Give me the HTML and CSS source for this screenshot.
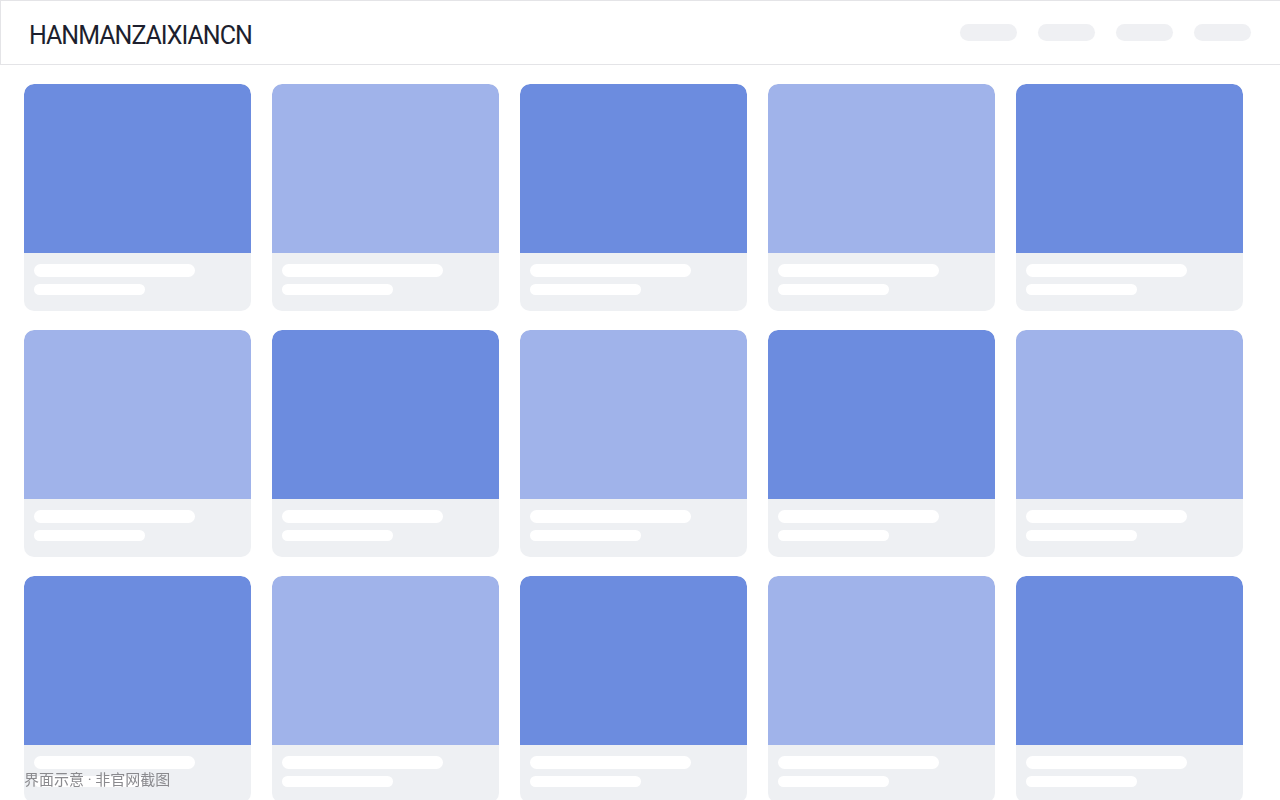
FILE: index.html
```html
<!DOCTYPE html>
<html lang="zh-CN">
<head>
<meta charset="utf-8">
<title>HANMANZAIXIANCN</title>
<link rel="stylesheet" href="styles.css">
</head>
<body>
<header class="topbar">
  <div class="logo">HANMANZAIXIANCN</div>
  <nav class="nav">
    <span class="nav-pill"></span>
    <span class="nav-pill"></span>
    <span class="nav-pill"></span>
    <span class="nav-pill"></span>
  </nav>
</header>
<main class="grid">
  <div class="card"><div class="thumb dark"></div><div class="meta"><span class="line long"></span><span class="line short"></span></div></div>
  <div class="card"><div class="thumb light"></div><div class="meta"><span class="line long"></span><span class="line short"></span></div></div>
  <div class="card"><div class="thumb dark"></div><div class="meta"><span class="line long"></span><span class="line short"></span></div></div>
  <div class="card"><div class="thumb light"></div><div class="meta"><span class="line long"></span><span class="line short"></span></div></div>
  <div class="card"><div class="thumb dark"></div><div class="meta"><span class="line long"></span><span class="line short"></span></div></div>

  <div class="card"><div class="thumb light"></div><div class="meta"><span class="line long"></span><span class="line short"></span></div></div>
  <div class="card"><div class="thumb dark"></div><div class="meta"><span class="line long"></span><span class="line short"></span></div></div>
  <div class="card"><div class="thumb light"></div><div class="meta"><span class="line long"></span><span class="line short"></span></div></div>
  <div class="card"><div class="thumb dark"></div><div class="meta"><span class="line long"></span><span class="line short"></span></div></div>
  <div class="card"><div class="thumb light"></div><div class="meta"><span class="line long"></span><span class="line short"></span></div></div>

  <div class="card"><div class="thumb dark"></div><div class="meta"><span class="line long"></span><span class="line short"></span></div></div>
  <div class="card"><div class="thumb light"></div><div class="meta"><span class="line long"></span><span class="line short"></span></div></div>
  <div class="card"><div class="thumb dark"></div><div class="meta"><span class="line long"></span><span class="line short"></span></div></div>
  <div class="card"><div class="thumb light"></div><div class="meta"><span class="line long"></span><span class="line short"></span></div></div>
  <div class="card"><div class="thumb dark"></div><div class="meta"><span class="line long"></span><span class="line short"></span></div></div>
</main>
<div class="note">界面示意 · 非官网截图</div>
</body>
</html>
```

FILE: styles.css
```css
* {
  box-sizing: border-box;
}

html, body {
  margin: 0;
  padding: 0;
  background: #ffffff;
}

body {
  font-family: Roboto, "Noto Sans", "Noto Sans CJK SC", sans-serif;
}

/* top bar */
.topbar {
  height: 65px;
  display: flex;
  align-items: center;
  justify-content: space-between;
  padding: 0 29px 0 28px;
  border: 1px solid #e4e4e7;
  border-right: none;
}

.logo {
  font-family: Roboto, sans-serif;
  font-size: 25px;
  font-weight: 400;
  letter-spacing: -1px;
  color: #1d1f2e;
  padding-top: 6px;
}

.nav {
  display: flex;
  gap: 21px;
}

.nav-pill {
  display: block;
  width: 57px;
  height: 17px;
  border-radius: 9px;
  background: #eff0f3;
}

/* card grid */
.grid {
  display: grid;
  grid-template-columns: repeat(5, 227px);
  column-gap: 21px;
  row-gap: 19px;
  padding: 19px 24px 0;
}

.card {
  background: #eef0f3;
  border-radius: 10px;
  overflow: hidden;
}

.thumb {
  height: 169px;
  border-radius: 10px 10px 0 0;
}

.thumb.dark {
  background: #6c8cdf;
}

.thumb.light {
  background: #a0b3ea;
}

.meta {
  height: 58px;
  padding: 11px 10px 0;
  display: flex;
  flex-direction: column;
  gap: 7px;
}

.line {
  display: block;
  background: #ffffff;
  border-radius: 7px;
}

.line.long {
  width: 161px;
  height: 13px;
}

.line.short {
  width: 111px;
  height: 11px;
}

/* caption in the corner */
.note {
  position: fixed;
  left: 24px;
  bottom: 10px;
  font-family: Roboto, "Noto Sans CJK SC", sans-serif;
  font-size: 15px;
  line-height: 20px;
  color: #8a8a8e;
}
```
